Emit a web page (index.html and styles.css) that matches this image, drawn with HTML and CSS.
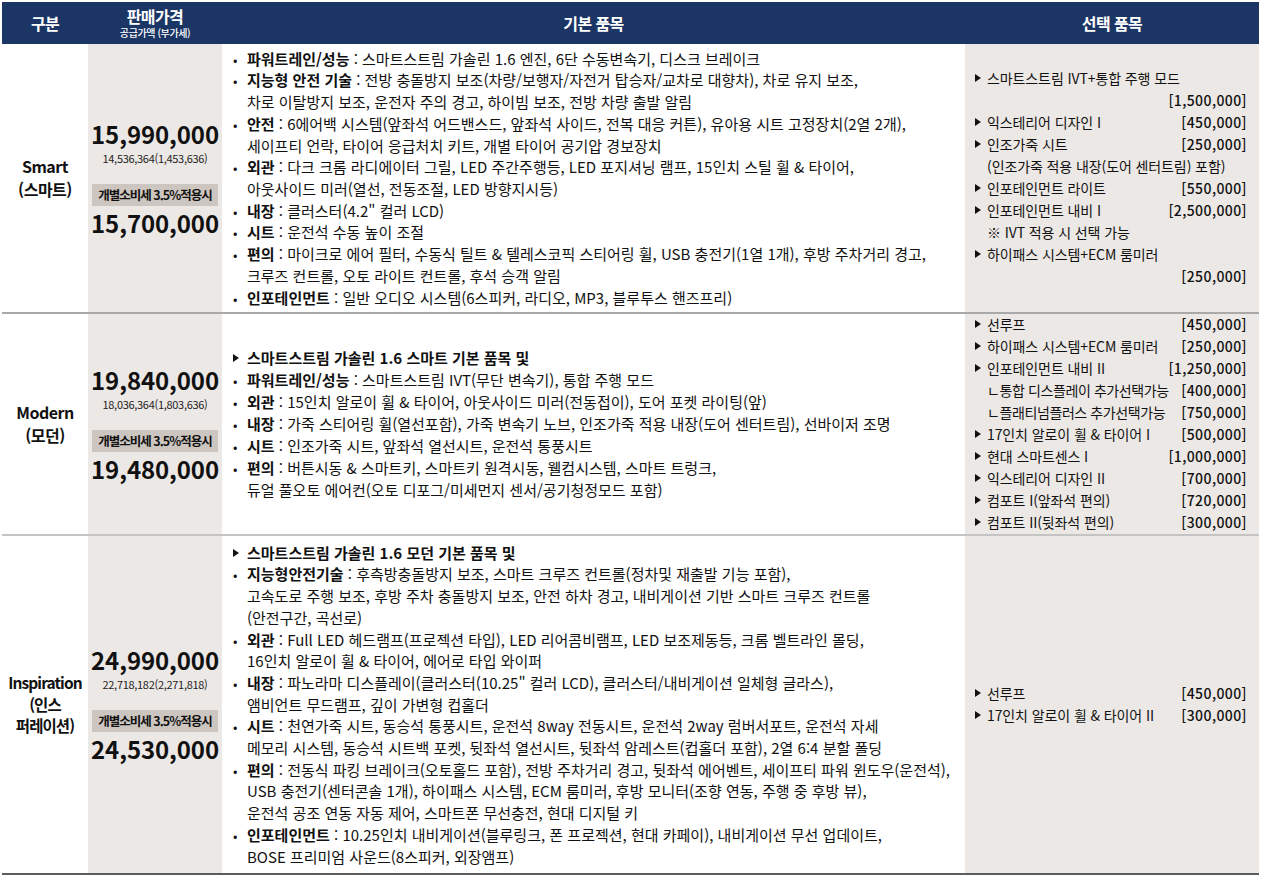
FILE: index.html
```html
<!DOCTYPE html>
<html lang="ko">
<head>
<meta charset="utf-8">
<title>가격표</title>
<link rel="stylesheet" href="styles.css">
</head>
<body>
<div class="table">
  <div class="row head">
    <div class="cell c1">구분</div>
    <div class="cell c2"><div class="h-main">판매가격</div><div class="h-sub">공급가액 (부가세)</div></div>
    <div class="cell c3">기본 품목</div>
    <div class="cell c4">선택 품목</div>
  </div>

  <div class="row r1">
    <div class="cell c1 name">Smart<br>(스마트)</div>
    <div class="cell c2 price">
      <div class="p-main">15,990,000</div>
      <div class="p-sub">14,536,364(1,453,636)</div>
      <div class="badge">개별소비세 3.5%적용시</div>
      <div class="p-final">15,700,000</div>
    </div>
    <div class="cell c3 basic">
      <div class="item"><span class="dot">•</span><b>파워트레인/성능</b> : 스마트스트림 가솔린 1.6 엔진, 6단 수동변속기, 디스크 브레이크</div>
      <div class="item"><span class="dot">•</span><b>지능형 안전 기술</b> : 전방 충돌방지 보조(차량/보행자/자전거 탑승자/교차로 대향차), 차로 유지 보조,<br>차로 이탈방지 보조, 운전자 주의 경고, 하이빔 보조, 전방 차량 출발 알림</div>
      <div class="item"><span class="dot">•</span><b>안전</b> : 6에어백 시스템(앞좌석 어드밴스드, 앞좌석 사이드, 전복 대응 커튼), 유아용 시트 고정장치(2열 2개),<br>세이프티 언락, 타이어 응급처치 키트, 개별 타이어 공기압 경보장치</div>
      <div class="item"><span class="dot">•</span><b>외관</b> : 다크 크롬 라디에이터 그릴, LED 주간주행등, LED 포지셔닝 램프, 15인치 스틸 휠 &amp; 타이어,<br>아웃사이드 미러(열선, 전동조절, LED 방향지시등)</div>
      <div class="item"><span class="dot">•</span><b>내장</b> : 클러스터(4.2" 컬러 LCD)</div>
      <div class="item"><span class="dot">•</span><b>시트</b> : 운전석 수동 높이 조절</div>
      <div class="item"><span class="dot">•</span><b>편의</b> : 마이크로 에어 필터, 수동식 틸트 &amp; 텔레스코픽 스티어링 휠, USB 충전기(1열 1개), 후방 주차거리 경고,<br>크루즈 컨트롤, 오토 라이트 컨트롤, 후석 승객 알림</div>
      <div class="item"><span class="dot">•</span><b>인포테인먼트</b> : 일반 오디오 시스템(6스피커, 라디오, MP3, 블루투스 핸즈프리)</div>
    </div>
    <div class="cell c4 opt">
      <div class="opt-line"><span><i class="tri"></i>스마트스트림 IVT+통합 주행 모드</span></div>
      <div class="opt-line end"><span class="amt">[1,500,000]</span></div>
      <div class="opt-line"><span><i class="tri"></i>익스테리어 디자인 I</span><span class="amt">[450,000]</span></div>
      <div class="opt-line"><span><i class="tri"></i>인조가죽 시트</span><span class="amt">[250,000]</span></div>
      <div class="opt-line note">(인조가죽 적용 내장(도어 센터트림) 포함)</div>
      <div class="opt-line"><span><i class="tri"></i>인포테인먼트 라이트</span><span class="amt">[550,000]</span></div>
      <div class="opt-line"><span><i class="tri"></i>인포테인먼트 내비 I</span><span class="amt">[2,500,000]</span></div>
      <div class="opt-line note">※ IVT 적용 시 선택 가능</div>
      <div class="opt-line"><span><i class="tri"></i>하이패스 시스템+ECM 룸미러</span></div>
      <div class="opt-line end"><span class="amt">[250,000]</span></div>
    </div>
  </div>

  <div class="row r2">
    <div class="cell c1 name">Modern<br>(모던)</div>
    <div class="cell c2 price">
      <div class="p-main">19,840,000</div>
      <div class="p-sub">18,036,364(1,803,636)</div>
      <div class="badge">개별소비세 3.5%적용시</div>
      <div class="p-final">19,480,000</div>
    </div>
    <div class="cell c3 basic wide">
      <div class="item lead"><i class="tri"></i><b>스마트스트림 가솔린 1.6 스마트 기본 품목 및</b></div>
      <div class="item"><span class="dot">•</span><b>파워트레인/성능</b> : 스마트스트림 IVT(무단 변속기), 통합 주행 모드</div>
      <div class="item"><span class="dot">•</span><b>외관</b> : 15인치 알로이 휠 &amp; 타이어, 아웃사이드 미러(전동접이), 도어 포켓 라이팅(앞)</div>
      <div class="item"><span class="dot">•</span><b>내장</b> : 가죽 스티어링 휠(열선포함), 가죽 변속기 노브, 인조가죽 적용 내장(도어 센터트림), 선바이저 조명</div>
      <div class="item"><span class="dot">•</span><b>시트</b> : 인조가죽 시트, 앞좌석 열선시트, 운전석 통풍시트</div>
      <div class="item"><span class="dot">•</span><b>편의</b> : 버튼시동 &amp; 스마트키, 스마트키 원격시동, 웰컴시스템, 스마트 트렁크,<br>듀얼 풀오토 에어컨(오토 디포그/미세먼지 센서/공기청정모드 포함)</div>
    </div>
    <div class="cell c4 opt">
      <div class="opt-line"><span><i class="tri"></i>선루프</span><span class="amt">[450,000]</span></div>
      <div class="opt-line"><span><i class="tri"></i>하이패스 시스템+ECM 룸미러</span><span class="amt">[250,000]</span></div>
      <div class="opt-line"><span><i class="tri"></i>인포테인먼트 내비 II</span><span class="amt">[1,250,000]</span></div>
      <div class="opt-line sub"><span>ㄴ통합 디스플레이 추가선택가능</span><span class="amt">[400,000]</span></div>
      <div class="opt-line sub"><span>ㄴ플래티넘플러스 추가선택가능</span><span class="amt">[750,000]</span></div>
      <div class="opt-line"><span><i class="tri"></i>17인치 알로이 휠 &amp; 타이어 I</span><span class="amt">[500,000]</span></div>
      <div class="opt-line"><span><i class="tri"></i>현대 스마트센스 I</span><span class="amt">[1,000,000]</span></div>
      <div class="opt-line"><span><i class="tri"></i>익스테리어 디자인 II</span><span class="amt">[700,000]</span></div>
      <div class="opt-line"><span><i class="tri"></i>컴포트 I(앞좌석 편의)</span><span class="amt">[720,000]</span></div>
      <div class="opt-line"><span><i class="tri"></i>컴포트 II(뒷좌석 편의)</span><span class="amt">[300,000]</span></div>
    </div>
  </div>

  <div class="row r3">
    <div class="cell c1 name tight">Inspiration<br>(인스<br>퍼레이션)</div>
    <div class="cell c2 price">
      <div class="p-main">24,990,000</div>
      <div class="p-sub">22,718,182(2,271,818)</div>
      <div class="badge">개별소비세 3.5%적용시</div>
      <div class="p-final">24,530,000</div>
    </div>
    <div class="cell c3 basic">
      <div class="item lead"><i class="tri"></i><b>스마트스트림 가솔린 1.6 모던 기본 품목 및</b></div>
      <div class="item"><span class="dot">•</span><b>지능형안전기술</b> : 후측방충돌방지 보조, 스마트 크루즈 컨트롤(정차및 재출발 기능 포함),<br>고속도로 주행 보조, 후방 주차 충돌방지 보조, 안전 하차 경고, 내비게이션 기반 스마트 크루즈 컨트롤<br>(안전구간, 곡선로)</div>
      <div class="item"><span class="dot">•</span><b>외관</b> : Full LED 헤드램프(프로젝션 타입), LED 리어콤비램프, LED 보조제동등, 크롬 벨트라인 몰딩,<br>16인치 알로이 휠 &amp; 타이어, 에어로 타입 와이퍼</div>
      <div class="item"><span class="dot">•</span><b>내장</b> : 파노라마 디스플레이(클러스터(10.25" 컬러 LCD), 클러스터/내비게이션 일체형 글라스),<br>앰비언트 무드램프, 깊이 가변형 컵홀더</div>
      <div class="item"><span class="dot">•</span><b>시트</b> : 천연가죽 시트, 동승석 통풍시트, 운전석 8way 전동시트, 운전석 2way 럼버서포트, 운전석 자세<br>메모리 시스템, 동승석 시트백 포켓, 뒷좌석 열선시트, 뒷좌석 암레스트(컵홀더 포함), 2열 6:4 분할 폴딩</div>
      <div class="item"><span class="dot">•</span><b>편의</b> : 전동식 파킹 브레이크(오토홀드 포함), 전방 주차거리 경고, 뒷좌석 에어벤트, 세이프티 파워 윈도우(운전석),<br>USB 충전기(센터콘솔 1개), 하이패스 시스템, ECM 룸미러, 후방 모니터(조향 연동, 주행 중 후방 뷰),<br>운전석 공조 연동 자동 제어, 스마트폰 무선충전, 현대 디지털 키</div>
      <div class="item"><span class="dot">•</span><b>인포테인먼트</b> : 10.25인치 내비게이션(블루링크, 폰 프로젝션, 현대 카페이), 내비게이션 무선 업데이트,<br>BOSE 프리미엄 사운드(8스피커, 외장앰프)</div>
    </div>
    <div class="cell c4 opt">
      <div class="opt-line"><span><i class="tri"></i>선루프</span><span class="amt">[450,000]</span></div>
      <div class="opt-line"><span><i class="tri"></i>17인치 알로이 휠 &amp; 타이어 II</span><span class="amt">[300,000]</span></div>
    </div>
  </div>
</div>
</body>
</html>
```

FILE: styles.css
```css
* { box-sizing: border-box; }
body {
  margin: 0;
  background: #fff;
  font-family: "Noto Sans CJK KR", "Noto Sans", sans-serif;
  color: #111;
}
.table {
  margin: 2px 0 0 2px;
  width: 1257px;
}
.row {
  display: grid;
  grid-template-columns: 86px 134px 743px 294px;
}
.cell {
  display: flex;
  flex-direction: column;
  justify-content: center;
}
.c2, .c4 { background: #ece8e5; }

/* header */
.head { height: 42px; background: #1b3565; color: #fff; }
.head .cell {
  background: transparent;
  align-items: center;
  font-weight: 700;
  font-size: 16px;
  letter-spacing: -0.6px;
}
.head .h-main { font-size: 16px; line-height: 18px; }
.head .h-sub { font-size: 10px; line-height: 12px; margin-top: 2px; letter-spacing: -0.4px; font-weight: 500; }

/* rows */
.r1 { height: 270px; border-bottom: 2px solid #a9a9a9; }
.r2 { height: 222px; border-bottom: 2px solid #c4c4c4; }
.r3 { height: 339px; border-bottom: 2px solid #5c5c5c; }

.name {
  align-items: center;
  text-align: center;
  font-weight: 700;
  font-size: 16px;
  line-height: 23px;
  letter-spacing: -0.5px;
}
.name.tight { line-height: 21.5px; letter-spacing: -0.9px; font-size: 15.5px; }

.price { align-items: center; }
.p-main, .p-final {
  font-size: 24px;
  font-weight: 700;
  line-height: 26px;
  letter-spacing: -0.1px;
}
.p-sub {
  margin-top: 4px;
  font-size: 11px;
  line-height: 14px;
  letter-spacing: -0.3px;
  color: #222;
}
.badge {
  margin-top: 19px;
  width: 126px;
  height: 22px;
  background: #cdc5bf;
  font-size: 12.5px;
  font-weight: 700;
  line-height: 22px;
  text-align: center;
  letter-spacing: -1px;
  white-space: nowrap;
}
.p-final { margin-top: 4px; }

/* basic items */
.basic {
  padding-left: 10px;
  font-size: 15px;
  line-height: 21.7px;
  white-space: nowrap;
  letter-spacing: 0;
}
.basic.wide { line-height: 22.1px; }
.item { padding-left: 15px; text-indent: -15px; }
.item b { font-weight: 700; }
.dot {
  display: inline-block;
  width: 15px;
  text-indent: 0;
  font-size: 13px;
  line-height: 0;
  padding-left: 1px;
}
.tri {
  display: inline-block;
  width: 0;
  height: 0;
  border-top: 4px solid transparent;
  border-bottom: 4px solid transparent;
  border-left: 6px solid #111;
  margin-right: 6px;
  vertical-align: 2px;
}
.item.lead .tri { margin-left: 1px; margin-right: 8px; }

/* options */
.opt {
  padding: 0 12px 0 10px;
  font-size: 14px;
  line-height: 21.9px;
  letter-spacing: -0.1px;
  white-space: nowrap;
}
.opt-line { display: flex; justify-content: space-between; }
.opt-line.end { justify-content: flex-end; }
.opt-line.note, .opt-line.sub { padding-left: 12px; }
.opt-line.sub { letter-spacing: -0.4px; }
.amt { font-weight: 500; letter-spacing: 0.4px; }
```
